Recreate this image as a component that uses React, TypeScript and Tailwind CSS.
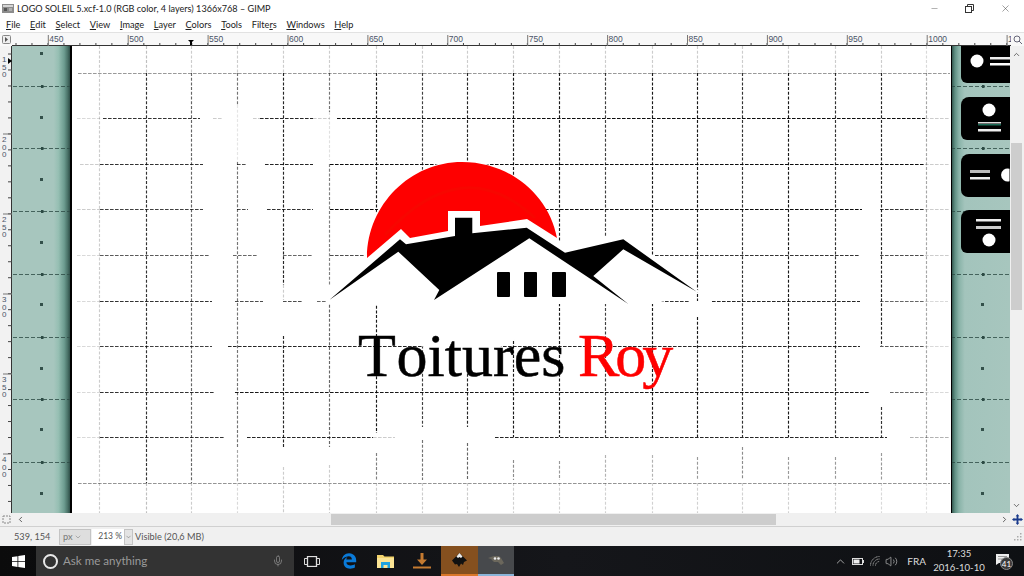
import React from "react";
import { FaEdgeLegacy } from "react-icons/fa";
import { Volume2, ChevronUp, ChevronDown, ChevronLeft, ChevronRight, Mic, X, Minus } from "lucide-react";

type Seg = [number, number, number];
const H: { p: number; s: Seg[] }[] = [
  { p: 73, s: [[78, 950, 0.4]] },
  { p: 118, s: [[77, 100, 0.15], [103, 200, 0.8], [213, 223, 0.2], [253, 260, 0.2], [260, 313, 0.85], [313, 330, 0.2], [337, 925, 0.95], [925, 950, 0.2]] },
  { p: 164, s: [[80, 100, 0.2], [100, 203, 0.8], [237, 247, 0.7], [265, 313, 0.85], [330, 925, 0.95], [925, 950, 0.2]] },
  { p: 209, s: [[77, 100, 0.2], [100, 203, 0.75], [237, 248, 0.7], [267, 313, 0.8], [330, 862, 0.95], [880, 925, 0.8], [925, 950, 0.2]] },
  { p: 255, s: [[77, 100, 0.15], [100, 210, 0.65], [233, 257, 0.6], [283, 313, 0.6], [330, 370, 0.7], [655, 860, 0.8], [880, 925, 0.7], [925, 950, 0.2]] },
  { p: 301, s: [[77, 100, 0.15], [100, 212, 0.8], [235, 263, 0.7], [283, 303, 0.7], [317, 330, 0.6], [660, 690, 0.8], [712, 860, 0.85], [880, 925, 0.6], [925, 948, 0.15]] },
  { p: 346, s: [[77, 100, 0.15], [100, 212, 0.75], [228, 860, 0.85], [880, 925, 0.65], [925, 950, 0.15]] },
  { p: 392, s: [[77, 100, 0.15], [100, 215, 0.8], [235, 870, 0.9], [890, 925, 0.6], [925, 950, 0.15]] },
  { p: 437, s: [[77, 100, 0.15], [100, 225, 0.8], [247, 373, 0.85], [373, 395, 0.2], [495, 887, 0.85], [910, 950, 0.3]] },
  { p: 483, s: [[78, 950, 0.42]] },
];
const V: { p: number; s: Seg[] }[] = [
  { p: 99, s: [[46, 513, 0.2]] },
  { p: 146, s: [[46, 73, 0.25], [73, 483, 0.8], [483, 513, 0.25]] },
  { p: 191, s: [[46, 73, 0.2], [73, 483, 0.6], [483, 513, 0.2]] },
  { p: 237, s: [[46, 73, 0.2], [73, 105, 0.55], [105, 162, 0.1], [162, 447, 0.55], [450, 483, 0.35], [483, 513, 0.15]] },
  { p: 283, s: [[46, 73, 0.2], [73, 285, 0.85], [285, 300, 0.2], [336, 447, 0.85], [467, 513, 0.2]] },
  { p: 329, s: [[46, 73, 0.2], [73, 112, 0.55], [112, 160, 0.12], [164, 285, 0.5], [300, 447, 0.6], [465, 513, 0.2]] },
  { p: 376, s: [[46, 73, 0.2], [73, 290, 0.9], [301, 433, 0.9], [453, 480, 0.5], [483, 513, 0.2]] },
  { p: 422, s: [[46, 73, 0.2], [73, 427, 0.75], [440, 480, 0.55], [483, 513, 0.2]] },
  { p: 467, s: [[46, 73, 0.2], [73, 427, 0.85], [443, 480, 0.6], [483, 513, 0.2]] },
  { p: 513, s: [[46, 73, 0.2], [73, 437, 0.9], [460, 480, 0.45], [483, 513, 0.18]] },
  { p: 559, s: [[46, 73, 0.2], [73, 437, 0.9], [461, 480, 0.4], [483, 513, 0.18]] },
  { p: 605, s: [[46, 73, 0.2], [73, 437, 0.75], [455, 480, 0.3], [483, 513, 0.18]] },
  { p: 652, s: [[46, 73, 0.2], [73, 437, 0.9], [455, 480, 0.3], [483, 513, 0.18]] },
  { p: 697, s: [[46, 73, 0.2], [73, 301, 0.9], [317, 437, 0.9], [457, 480, 0.4], [483, 513, 0.18]] },
  { p: 742, s: [[46, 73, 0.2], [73, 437, 0.8], [447, 480, 0.45], [483, 513, 0.18]] },
  { p: 788, s: [[46, 73, 0.2], [73, 437, 0.9], [457, 480, 0.4], [483, 513, 0.18]] },
  { p: 835, s: [[46, 73, 0.2], [73, 437, 0.8], [457, 480, 0.4], [483, 513, 0.18]] },
  { p: 881, s: [[46, 73, 0.2], [73, 346, 0.85], [407, 437, 0.8], [453, 480, 0.4], [483, 513, 0.15]] },
  { p: 926, s: [[46, 73, 0.15], [73, 480, 0.35], [483, 513, 0.12]] },
];

const z = (x: number, y: number) => `${(320 + x / 3).toFixed(1)},${(150 + y / 3).toFixed(1)}`;
const pts = (a: [number, number][]) => a.map(([x, y]) => z(x, y)).join(" ");
const roof = pts([
  [28, 450], [240, 268], [258, 283], [405, 258], [405, 203], [457, 203], [457, 250], [620, 233], [735, 308],
  [910, 268], [1130, 425], [910, 298], [820, 378], [925, 462], [628, 265], [342, 450], [358, 420], [235, 305],
]);
const roofMask = pts([
  [20, 462], [20, 440], [240, 240], [385, 215], [385, 180], [480, 180], [480, 225], [625, 205], [735, 285], [910, 250],
  [1140, 425], [1000, 462],
]);
const sun = `M367 258 C367 205 410 162 462 162 C510 162 549 195 557 238 L527 219 L480 226 L480 211 L448 211 L448 231 L410 238 L401 229 Z`;

function CanvasArt() {
  return (
    <svg viewBox="72 46 879 467" width="879" height="467" className="block blur-[0.3px]">
      {H.map((l) =>
        l.s.map((s, i) => (
          <line key={`h${l.p}${i}`} x1={s[0]} x2={s[1]} y1={l.p + 0.5} y2={l.p + 0.5} stroke="#000" strokeWidth="1.15" strokeOpacity={s[2]} strokeDasharray="3.6 1.4" />
        ))
      )}
      {V.map((l) =>
        l.s.map((s, i) => (
          <line key={`v${l.p}${i}`} y1={s[0]} y2={s[1]} x1={l.p + 0.5} x2={l.p + 0.5} stroke="#000" strokeWidth="1.15" strokeOpacity={s[2]} strokeDasharray="3 1.7" />
        ))
      )}
      <circle cx="462" cy="258" r="97" fill="#fff" />
      <polygon points={roofMask} fill="#fff" />
      <path d={sun} fill="#fe0000" />
      <path d="M385 235 Q462 150 535 218" fill="none" stroke="#ee1000" strokeWidth="3" opacity="0.35" />
      <polygon points={roof} fill="#000" />
      <rect x="497" y="272" width="13" height="25" rx="1" fill="#000" />
      <rect x="524" y="272" width="13" height="25" rx="1" fill="#000" />
      <rect x="552" y="272" width="14" height="25" rx="1" fill="#000" />
      <text x="358" y="376" fontFamily='"Liberation Serif", serif' fontSize="62" stroke="#000" strokeWidth="0.5" fill="#000">T<tspan dx="5">oitures</tspan></text>
      <text x="578" y="376" fontFamily='"Liberation Serif", serif' fontSize="62" letterSpacing="-4" stroke="#f00" strokeWidth="0.5" fill="#f00">Roy</text>
    </svg>
  );
}

const dots = [53, 117, 179, 242, 304, 368, 429, 493];
const dashes = [86, 148, 211, 274, 337, 399, 462];

function LeftArt() {
  return (
    <svg viewBox="12 46 58 467" width="58" height="467" className="block">
      {dots.map((y) => <rect key={y} x="40" y={y - 1} width="3" height="3" fill="#33504a" />)}
      {dashes.map((y) => (
        <g key={y}>
          <line x1="13" x2="70" y1={y + 0.5} y2={y + 0.5} stroke="#2c4a44" strokeOpacity="0.8" strokeDasharray="4 2" />
          <rect x="41" y={y - 1} width="2.5" height="3" fill="#2c4a44" />
        </g>
      ))}
    </svg>
  );
}

function RightArt() {
  return (
    <svg viewBox="952 46 59 467" width="59" height="467" className="block">
      {dots.slice(3).map((y) => <rect key={y} x="982" y={y - 1} width="3" height="3" fill="#33504a" />)}
      {dashes.map((y) => (
        <g key={y}>
          <line x1="952" x2="1011" y1={y + 0.5} y2={y + 0.5} stroke="#2c4a44" strokeOpacity="0.8" strokeDasharray="4 2" />
          <rect x="983" y={y - 1} width="2.5" height="3" fill="#2c4a44" />
        </g>
      ))}
      <path d="M962 40H1011V83H968a6 6 0 0 1-6-6Z" fill="#000" />
      <path d="M1011 97H970a8 8 0 0 0-8 8V134a6 6 0 0 0 6 6H1011Z" fill="#000" />
      <path d="M1011 154H970a8 8 0 0 0-8 8V190a7 7 0 0 0 7 7H1011Z" fill="#000" />
      <path d="M1011 210H970a8 8 0 0 0-8 8V247a6 6 0 0 0 6 6H1011Z" fill="#000" />
      <circle cx="978" cy="61" r="6.5" fill="#fff" />
      <rect x="991" y="57" width="20" height="2.5" fill="#eee" />
      <rect x="991" y="63" width="20" height="2.5" fill="#fff" />
      <circle cx="990" cy="110" r="6.5" fill="#fff" />
      <rect x="979" y="122" width="23" height="1.5" fill="#ddd" />
      <rect x="979" y="124" width="23" height="1.5" fill="#1a6a55" />
      <rect x="979" y="129" width="23" height="2.5" fill="#eee" />
      <rect x="971" y="170" width="20" height="3" fill="#bbb" />
      <rect x="971" y="177" width="20" height="2.5" fill="#eee" />
      <path d="M1010.5 168.8a6.5 6.5 0 1 0 0 12.4Z" fill="#fff" />
      <rect x="977" y="219" width="25" height="2.5" fill="#eee" />
      <rect x="977" y="226" width="25" height="3" fill="#ccc" />
      <circle cx="990" cy="240" r="6.5" fill="#fff" />
    </svg>
  );
}

function TopRuler() {
  const labels = ["450", "500", "550", "600", "650", "700", "750", "800", "850", "900", "950", "1000", "1"];
  return (
    <svg viewBox="12 33 999 13" width="999" height="13" className="block">
      <line x1="12" x2="1011" y1="45.5" y2="45.5" stroke="#333" />
      {Array.from({ length: 63 }, (_, i) => {
        const x = 16 + i * 15.98;
        return <line key={i} x1={x} x2={x} y1="43" y2="46" stroke="#444" />;
      })}
      {labels.map((t, i) => {
        const x = 48.3 + i * 79.9;
        return (
          <g key={t}>
            <line x1={x} x2={x} y1="35" y2="46" stroke="#777" />
            <text x={x + 1} y="42" fontFamily='"Liberation Sans", sans-serif' fontSize="8.5" fill="#4a5468">{t}</text>
          </g>
        );
      })}
      <path d="M188 40h6l-2 2v3h-2v-3Z" fill="#000" />
    </svg>
  );
}

function LeftRuler() {
  const labels = [["1", "5", "0", 54], ["2", "0", "0", 134], ["2", "5", "0", 214], ["3", "0", "0", 294], ["3", "5", "0", 374], ["4", "0", "0", 454]] as const;
  return (
    <svg viewBox="0 46 12 467" width="12" height="467" className="block">
      <line x1="11.5" x2="11.5" y1="46" y2="513" stroke="#333" />
      {Array.from({ length: 30 }, (_, i) => {
        const y = 54 + i * 15.98;
        return <line key={i} x1="8" x2="12" y1={y} y2={y} stroke="#444" />;
      })}
      {labels.map((l) => (
        <g key={l[3]}>
          {l[3] > 54 && <line x1="3" x2="12" y1={l[3]} y2={l[3]} stroke="#777" />}
          {[0, 1, 2].map((k) => (
            <text key={k} x="2" y={l[3] + 8 + k * 7.5} fontFamily='"Liberation Sans", sans-serif' fontSize="8" fill="#4a5468">{l[k]}</text>
          ))}
        </g>
      ))}
      <path d="M8 58l4 3-4 3Z" fill="#000" />
    </svg>
  );
}

const menu = ["File", "Edit", "Select", "View", "Image", "Layer", "Colors", "Tools", "Filters", "Windows", "Help"];

function MenuItem({ t }: { t: string }) {
  const idx = t === "Filters" ? 5 : 0;
  return (
    <span className="whitespace-nowrap">
      {t.slice(0, idx)}
      <span className="underline">{t[idx]}</span>
      {t.slice(idx + 1)}
    </span>
  );
}

export default function App() {
  return (
    <div className="w-[1024px] h-[576px] overflow-hidden flex flex-col bg-[#f0f0f0] font-['Lato',sans-serif] text-[#222]">
      <div className="h-[17px] bg-white flex items-center relative">
        <svg width="12" height="9" viewBox="0 0 12 9" className="ml-[2px] mr-[3px]">
          <rect width="12" height="9" fill="#8c8c8c" />
          <rect x="1" y="1" width="10" height="2" fill="#d5d5d5" />
          <rect x="2" y="4" width="3" height="3" fill="#555" />
          <rect x="7" y="4" width="3" height="3" fill="#b0b0b0" />
        </svg>
        <span className="text-[9.1px] leading-none text-[#222] whitespace-nowrap">LOGO SOLEIL 5.xcf-1.0 (RGB color, 4 layers) 1366x768 – GIMP</span>
        <div className="ml-auto flex items-center text-[#333]">
          <Minus size={9} strokeWidth={1} className="mr-[26px]" />
          <svg width="9" height="9" viewBox="0 0 9 9" className="mr-[26px]" fill="none" stroke="#333">
            <rect x="0.5" y="2.5" width="6" height="6" />
            <path d="M2.5 2.5v-2h6v6h-2" />
          </svg>
          <X size={11} strokeWidth={1} className="mr-[13px]" />
        </div>
      </div>
      <div className="h-[16px] bg-white flex items-center gap-[9.7px] pl-[6px] text-[9.2px] leading-none text-[#222]">
        {menu.map((t) => <MenuItem key={t} t={t} />)}
      </div>
      <div className="h-[13px] flex bg-[#f8f8f8] border-t border-[#e2e2e2] box-content -mt-px">
        <div className="w-[12px] flex items-center justify-center">
          <svg width="9" height="9" viewBox="0 0 9 9">
            <rect x="0.5" y="0.5" width="8" height="8" rx="1" fill="#eee" stroke="#888" />
            <path d="M3 2l3 2.5L3 7Z" fill="#555" />
          </svg>
        </div>
        <TopRuler />
        <div className="w-[13px] flex items-center justify-center">
          <svg width="9" height="9" viewBox="0 0 9 9" fill="none" stroke="#667">
            <circle cx="4" cy="4" r="3" />
            <path d="M6 6l3 3" />
          </svg>
        </div>
      </div>
      <div className="h-[467px] flex">
        <div className="w-[12px] bg-[#f2f2f2]"><LeftRuler /></div>
        <div className="w-[58px] bg-[linear-gradient(90deg,#a7c6be_0%,#a7c6be_72%,#96bfb3_80%,#6d9c90_90%,#4a7268_96%,#2f4f48_100%)]">
          <LeftArt />
        </div>
        <div className="w-[2px] bg-black" />
        <div className="w-[879px] bg-white"><CanvasArt /></div>
        <div className="w-px bg-black" />
        <div className="w-[58px] overflow-hidden bg-[linear-gradient(90deg,#34584f_0%,#5f8f83_5%,#89b3a8_12%,#a3c4bc_22%,#a7c6be_100%)]">
          <div className="-ml-px"><RightArt /></div>
        </div>
        <div className="w-[13px] bg-[#f0f0f0] flex flex-col items-center">
          <ChevronUp size={9} strokeWidth={2} className="mt-[4px] text-[#444]" />
          <div className="mt-[84px] w-[11px] h-[167px] bg-[#cdcdcd]" />
          <ChevronDown size={9} strokeWidth={2} className="mt-[191px] text-[#444]" />
        </div>
      </div>
      <div className="h-[14px] flex items-center border-b border-[#d0d0d0] relative">
        <svg width="10" height="9" viewBox="0 0 10 9" className="ml-[2px]" fill="none" stroke="#888" strokeDasharray="2 1">
          <rect x="1" y="1" width="7" height="7" />
        </svg>
        <ChevronLeft size={9} strokeWidth={2} className="ml-[4px] text-[#333]" />
        <div className="ml-[306px] w-[445px] h-[11px] bg-[#cdcdcd]" />
        <ChevronRight size={9} strokeWidth={2} className="ml-[224px] text-[#333]" />
        <svg width="11" height="11" viewBox="0 0 12 12" className="ml-[3px]" fill="#1a3a8c">
          <path d="M6 0l2 2.5H7V5h2.5V4L12 6 9.500 8V7H7v2.500h1L6 12 4 9.500h1V7H2.500v1L0 6l2.500-2v1H5V2.500H4Z" />
        </svg>
      </div>
      <div className="h-[19px] flex items-center text-[9.2px] leading-none text-[#555] relative">
        <span className="ml-[14px] w-[45px]">539, 154</span>
        <div className="w-[32px] h-[16px] bg-[#dedede] border border-[#c4c4c4] flex items-center pl-[3px] text-[#777]">
          px
          <ChevronDown size={8} strokeWidth={1.5} className="ml-px" />
        </div>
        <div className="ml-px w-[32px] h-[16px] bg-white flex items-center justify-end pr-[2px] text-[8.5px]">213 %</div>
        <div className="w-[9px] h-[16px] bg-[#e4e4e4] border border-[#c4c4c4] flex items-center justify-center">
          <ChevronDown size={8} strokeWidth={1.5} />
        </div>
        <span className="ml-[2px]">Visible (20,6 MB)</span>
        <svg width="8" height="8" viewBox="0 0 8 8" className="ml-auto mr-[2px]" fill="#aaa">
          <rect x="6" y="0" width="1.500" height="1.500" /><rect x="3" y="3" width="1.500" height="1.500" /><rect x="6" y="3" width="1.500" height="1.500" />
          <rect x="0" y="6" width="1.500" height="1.500" /><rect x="3" y="6" width="1.500" height="1.500" /><rect x="6" y="6" width="1.500" height="1.500" />
        </svg>
      </div>
      <div className="h-[30px] flex items-stretch bg-[linear-gradient(90deg,#0b0b0c,#15161a_55%,#0e1013)] text-[#ddd]">
        <div className="w-[36px] flex items-center justify-center">
          <svg width="13" height="13" viewBox="0 0 13 13" fill="#fff">
            <path d="M0 2l5.500-.8v5H0ZM6.300 1.100L13 0v6.200H6.300ZM0 6.900h5.500v5L0 11ZM6.300 6.900H13V13l-6.700-1Z" />
          </svg>
        </div>
        <div className="w-[258px] bg-[#333333] flex items-center pl-[7px]">
          <div className="w-[15px] h-[15px] rounded-full border-2 border-[#e8e8e8]" />
          <span className="ml-[5px] text-[11.6px] leading-none text-[#9a9a9a] whitespace-nowrap">Ask me anything</span>
          <Mic size={12} strokeWidth={1.3} className="ml-auto mr-[10px] text-[#9a9a9a]" />
        </div>
        <div className="w-[36px] flex items-center justify-center">
          <svg width="16" height="11" viewBox="0 0 16 11" fill="none" stroke="#ddd">
            <rect x="3.500" y="0.500" width="9" height="10" strokeWidth="1.300" />
            <path d="M3 2.500H0.500v6H3M13 2.500h2.500v6H13" />
          </svg>
        </div>
        <div className="w-[37px] flex items-center justify-center text-[#0a7ad8]"><FaEdgeLegacy size={16} /></div>
        <div className="w-[37px] flex items-center justify-center">
          <svg width="17" height="14" viewBox="0 0 17 14">
            <path d="M0 1h6l1.500 1.500H17V14H0Z" fill="#f3d36b" />
            <path d="M0 4h17v10H0Z" fill="#fbe494" />
            <path d="M4 14V8h9v6h-2.500v-3h-4v3Z" fill="#1fa3e0" />
          </svg>
        </div>
        <div className="w-[36px] flex items-center justify-center">
          <svg width="18" height="16" viewBox="0 0 18 16" fill="#c47a30">
            <path d="M7.500 0h3v6.500H14L9 12 4 6.500h3.500Z" />
            <rect x="0" y="13.500" width="18" height="2" />
          </svg>
        </div>
        <div className="w-[37px] bg-[#85501f] border-b-2 border-[#d9772a] flex items-center justify-center ml-px">
          <svg width="17" height="17" viewBox="0 0 17 17">
            <path d="M8.500 1L16 8.500 13 10l-1 3-2-1.500L8 15l-2-3-2 .5L1 8.500Z" fill="#111" />
            <path d="M8.500 1L11.500 4.500 10 6l-1.500-1L7 6 5.500 4.500Z" fill="#eee" />
          </svg>
        </div>
        <div className="w-[36px] bg-[#47494c] border-b-2 border-[#8ab4d8] flex items-center justify-center">
          <svg width="16" height="10" viewBox="0 0 16 10">
            <path d="M0 3l3-1 3-1h5l2 2 3 5-3 2-3-3H6L3 4Z" fill="#6b675c" />
            <circle cx="7" cy="3.500" r="1.300" fill="#eee" />
            <circle cx="10.500" cy="3.500" r="1.300" fill="#eee" />
          </svg>
        </div>
        <div className="ml-auto flex items-center">
          <ChevronUp size={13} strokeWidth={1.3} className="text-[#ddd]" />
          <svg width="12" height="7" viewBox="0 0 12 7" className="ml-[5px]" fill="none">
            <rect x="0.500" y="0.500" width="10" height="6" stroke="#ddd" />
            <rect x="1.500" y="1.500" width="6" height="4" fill="#eee" />
            <rect x="11" y="2" width="1" height="3" fill="#ddd" />
          </svg>
          <svg width="11" height="10" viewBox="0 0 11 10" className="ml-[6px]" fill="none" stroke="#aaa" strokeDasharray="1 0.500">
            <path d="M0.500 9.500a9 9 0 0 1 9-9M3 9.500a6.500 6.500 0 0 1 6.500-6.500M5.500 9.500a4 4 0 0 1 4-4" />
          </svg>
          <Volume2 size={13} strokeWidth={1.2} className="ml-[4px] text-[#ccc]" />
          <span className="ml-[9px] text-[10px] leading-none text-[#ddd]">FRA</span>
          <div className="ml-[10px] w-[46px] flex flex-col items-center gap-[4px] text-[9.6px] leading-none text-[#ddd]">
            <span>17:35</span>
            <span className="whitespace-nowrap">2016-10-10</span>
          </div>
          <div className="relative ml-[14px] mr-[15px] w-[13px] h-[14px]">
            <svg width="13" height="11" viewBox="0 0 13 11" fill="#eee">
              <path d="M0 0h13v9H3l-3 2Z" />
              <path d="M2 2.500h9M2 5h9" stroke="#999" />
            </svg>
            <span className="absolute left-[4px] top-[3px] w-[13px] h-[13px] rounded-full bg-[#3a3a3a] border border-[#888] flex items-center justify-center text-[8px] leading-none text-white">41</span>
          </div>
        </div>
      </div>
    </div>
  );
}
